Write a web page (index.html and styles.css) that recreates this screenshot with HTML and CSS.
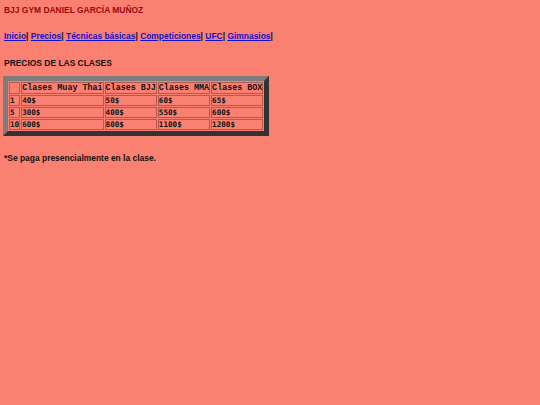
FILE: index.html
```html
<!DOCTYPE html>
<html lang="es">
<head>
<meta charset="utf-8">
<title>BJJ GYM</title>
<link rel="stylesheet" href="styles.css">
</head>
<body>
<h1 class="title">BJJ GYM DANIEL GARCÍA MUÑOZ</h1>
<nav class="nav"><a href="#">Inicio</a>| <a href="#">Precios</a>| <a href="#">Técnicas básicas</a>| <a href="#">Competiciones</a>| <a href="#">UFC</a>| <a href="#">Gimnasios</a>|</nav>
<h2 class="heading">PRECIOS DE LAS CLASES</h2>
<table class="prices">
<tr><th></th><th>Clases Muay Thai</th><th>Clases BJJ</th><th>Clases MMA</th><th>Clases BOX</th></tr>
<tr><td>1</td><td>40$</td><td>50$</td><td>60$</td><td>65$</td></tr>
<tr><td>5</td><td>300$</td><td>400$</td><td>550$</td><td>600$</td></tr>
<tr><td>10</td><td>600$</td><td>800$</td><td>1100$</td><td>1200$</td></tr>
</table>
<p class="note">*Se paga presencialmente en la clase.</p>
</body>
</html>
```
FILE: styles.css
```css
html, body {
  background: #fa8072;
}
body {
  margin: 0;
  padding: 5px 4px;
  font-family: "Liberation Sans", Arial, sans-serif;
  font-size: 8.45px;
  font-weight: bold;
  color: #111;
}
.title {
  margin: 0;
  font-size: 8.45px;
  line-height: 10px;
  color: #9b0a0a;
}
.nav {
  margin-top: 16px;
  line-height: 10px;
}
.nav a {
  color: #1010d0;
  text-decoration: underline;
}
.heading {
  margin: 17px 0 0;
  font-size: 8.45px;
  line-height: 10px;
}
.prices {
  margin: 8px 0 0 -1px;
  border-width: 5px;
  border-style: solid;
  border-color: #7c7c7c #333 #333 #7c7c7c;
  border-spacing: 1px;
}
.prices th, .prices td {
  border: 1px solid #b7584c;
  padding: 0;
  height: 9px;
  line-height: 9px;
  text-align: left;
  font-weight: bold;
  white-space: nowrap;
}
.prices th {
  height: 10px;
  line-height: 10px;
  font-family: "Liberation Mono", "Courier New", monospace;
  font-size: 8.4px;
}
.prices td {
  font-family: "DejaVu Sans Mono", monospace;
  font-size: 7.6px;
}
.note {
  margin: 17px 0 0;
  line-height: 10px;
}
```
